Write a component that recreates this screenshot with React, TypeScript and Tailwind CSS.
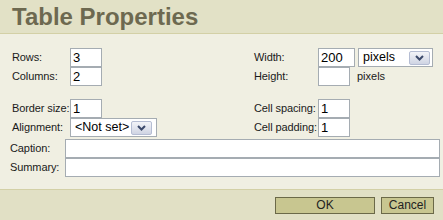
import React from 'react';

function TextBox({ value = '', className = '' }: { value?: string; className?: string }) {
  return (
    <div
      className={`h-[19px] shrink-0 bg-white border border-[#a5acb2] pl-[2px] text-[13px] leading-[17px] text-black whitespace-nowrap ${className}`}
    >
      {value}
    </div>
  );
}

function Chevron() {
  return (
    <div className="h-[14px] w-[21px] shrink-0 rounded-[2px] border border-[#b5bdd3] bg-gradient-to-b from-[#f3f4f8] to-[#cfd4e3] flex items-center justify-center">
      <svg width="9" height="6" viewBox="0 0 9 6">
        <path d="M1 1 L4.5 4.5 L8 1" fill="none" stroke="#3c4a6b" strokeWidth="2" />
      </svg>
    </div>
  );
}

function Select({ value, className = '' }: { value: string; className?: string }) {
  return (
    <div
      className={`h-[19px] shrink-0 bg-white border border-[#a5acb2] flex items-center justify-between pl-[4px] pr-[2px] text-[12.5px] text-black whitespace-nowrap ${className}`}
    >
      <span>{value}</span>
      <Chevron />
    </div>
  );
}

function Label({ children, className = '' }: { children: React.ReactNode; className?: string }) {
  return (
    <div className={`shrink-0 whitespace-nowrap text-[11px] tracking-[-0.1px] text-[#1a1a1a] ${className}`}>
      {children}
    </div>
  );
}

export default function App() {
  return (
    <div className="w-[443px] h-[220px] flex flex-col bg-[#f0efe2] font-['Liberation_Sans',Arial,sans-serif] overflow-hidden">
      <div className="h-[34px] shrink-0 border-b border-[#d3d0a6] bg-[#e2e1c6] pl-[12px] pt-[5px] text-[24px] font-bold leading-none text-[#6d6950]">
        Table Properties
      </div>

      <div className="flex-1 flex flex-col">
        {/* size block */}
        <div className="mt-[14px] flex flex-col">
          <div className="flex items-center h-[19px]">
            <div className="w-[254px] flex items-center pl-[12px]">
              <Label className="w-[58px]">Rows:</Label>
              <TextBox value="3" className="w-[32px]" />
            </div>
            <Label className="w-[64px]">Width:</Label>
            <TextBox value="200" className="w-[37px]" />
            <Select value="pixels" className="w-[75px] ml-[3px]" />
          </div>
          <div className="flex items-center h-[19px]">
            <div className="w-[254px] flex items-center pl-[12px]">
              <Label className="w-[58px]">Columns:</Label>
              <TextBox value="2" className="w-[32px]" />
            </div>
            <Label className="w-[64px]">Height:</Label>
            <TextBox className="w-[32px]" />
            <span className="ml-[7px] text-[11px] text-[#1a1a1a]">pixels</span>
          </div>
        </div>

        {/* border block */}
        <div className="mt-[13px] flex flex-col">
          <div className="flex items-center h-[19px]">
            <div className="w-[254px] flex items-center pl-[12px]">
              <Label className="w-[58px]">Border size:</Label>
              <TextBox value="1" className="w-[32px]" />
            </div>
            <Label className="w-[64px]">Cell spacing:</Label>
            <TextBox value="1" className="w-[32px]" />
          </div>
          <div className="flex items-center h-[19px]">
            <div className="w-[254px] flex items-center pl-[12px]">
              <Label className="w-[58px]">Alignment:</Label>
              <Select value="<Not set>" className="w-[87px] pr-[4px]" />
            </div>
            <Label className="w-[64px]">Cell padding:</Label>
            <TextBox value="1" className="w-[32px]" />
          </div>
        </div>

        {/* caption block */}
        <div className="mt-[2px] flex flex-col">
          <div className="flex items-center h-[19px] pl-[10px] pr-[3px]">
            <Label className="w-[55px]">Caption:</Label>
            <TextBox className="flex-1" />
          </div>
          <div className="flex items-center h-[19px] pl-[10px] pr-[3px]">
            <Label className="w-[55px]">Summary:</Label>
            <TextBox className="flex-1" />
          </div>
        </div>
      </div>

      <div className="h-[31px] shrink-0 border-t border-[#d3d0a6] bg-[#e1e0c5] flex justify-end items-start gap-[6px] pt-[7px] pr-[9px]">
        <button className="w-[100px] h-[17px] border border-[#6b6948] bg-[#c8c690] text-[12px] leading-[15px] text-[#222]">
          OK
        </button>
        <button className="w-[53px] h-[17px] border border-[#6b6948] bg-[#c8c690] text-[12px] leading-[15px] text-[#222]">
          Cancel
        </button>
      </div>
    </div>
  );
}
